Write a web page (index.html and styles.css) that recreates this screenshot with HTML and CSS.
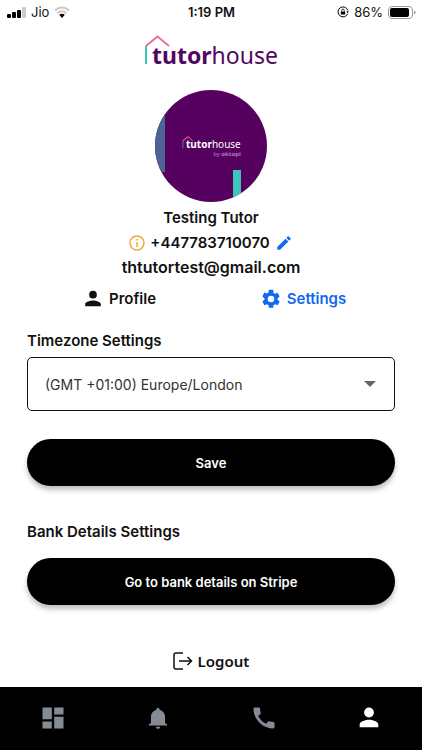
FILE: index.html
```
<!DOCTYPE html>

<html lang="en">

<head>

    <meta charset="UTF-8">

    <meta name="viewport" content="width=device-width, initial-scale=1.0">

    <title>Tutorhouse Settings</title>

    <link rel="stylesheet" href="styles.css">

</head>

<body>

    <div class="status-bar">

        <div class="status-left">
            <svg width="19" height="11" viewBox="0 0 19 11">
                <rect x="0" y="7" width="4" height="4" rx="1" />
                <rect x="5" y="5" width="4" height="6" rx="1" />
                <rect x="10" y="3" width="4" height="8" rx="1" />
                <rect x="15" y="0" width="4" height="11" rx="1" fill="#cccccc" />
            </svg>
            <span>Jio</span>
            <svg width="16" height="12" viewBox="0 0 16 12" fill="none" stroke="#cccccc" stroke-width="2">
                <path d="M1 4.5C5 .4 11 .4 15 4.5" />
                <path d="M3.4 7.2C6 4.6 10 4.6 12.6 7.2" />
                <path d="M5.2 8.7Q8 6.6 10.8 8.7L8 12z" fill="#000000" stroke="none" />
            </svg>
        </div>

        <span class="status-time">1:19 PM</span>

        <div class="status-right">
            <svg width="12" height="12" viewBox="0 0 12 12" fill="none" stroke="#000000">
                <path d="M10.7 7.7A5 5 0 1 1 10.8 4.4" />
                <path d="M9.3 5.2h2.5l-1.1 2z" fill="#000000" stroke="none" />
                <rect x="3.8" y="5.4" width="4.4" height="3.2" rx=".5" fill="#000000" stroke="none" />
                <path d="M4.7 5.5V4.4a1.3 1.3 0 0 1 2.6 0v1.1" stroke-width=".8" />
            </svg>
            <span>86%</span>
            <svg width="28" height="13" viewBox="0 0 28 13">
                <rect x=".5" y=".5" width="24" height="12" rx="3.5" fill="none" stroke="#999999" />
                <rect x="2" y="2" width="19" height="9" rx="2" />
                <path d="M26 4.5q1.6.5 1.6 2t-1.6 2z" fill="#999999" />
            </svg>
        </div>

    </div>

    <header class="logo">
        <svg class="logo-house" viewBox="0 0 28 30" fill="none" stroke-width="2">
            <path d="M2 11v18" stroke="#3fc5b9" />
            <path d="M2 11L13.500 1.500L25 11" stroke="#ee6b91" />
        </svg>
        <span class="logo-text"><b>tutor</b>house</span>
    </header>

    <main class="content">

        <div class="avatar">
            <div class="avatar-bar-blue"></div>
            <div class="avatar-bar-teal"></div>
            <div class="avatar-logo">
                <svg class="avatar-house" viewBox="0 0 28 30" fill="none" stroke-width="2.5">
                    <path d="M2 11v18" stroke="#47739b" />
                    <path d="M2 11L14 1.5L25 11" stroke="#dd4f91" />
                </svg>
                <span class="avatar-name"><b>tutor</b>house</span>
                <span class="avatar-by">by <b>oktopi</b></span>
            </div>
        </div>

        <div class="details">
            <div class="detail-row">Testing Tutor</div>
            <div class="detail-row">
                <svg width="16" height="16" viewBox="0 0 16 16" fill="none" stroke="#f0a62e">
                    <circle cx="8" cy="8" r="7" stroke-width="1.4" />
                    <path d="M8 7v5M8 4v1.6" stroke-width="1.4" />
                </svg>
                <span>+447783710070</span>
                <button class="icon-button" aria-label="Edit phone number">
                    <svg width="18" height="18" viewBox="0 0 24 24" fill="#1268f3">
                        <path d="M3 17.25V21h3.75L17.81 9.94l-3.75-3.75zM20.71 7.04a1 1 0 0 0 0-1.41l-2.34-2.34a1 1 0 0 0-1.41 0l-1.83 1.83 3.75 3.75z" />
                    </svg>
                </button>
            </div>
            <div class="detail-row detail-email">thtutortest@gmail.com</div>
        </div>

        <div class="tabs">
            <button class="tab">
                <svg width="22" height="22" viewBox="0 0 24 24">
                    <path d="M12 11.5a4.2 4.2 0 1 0 0-8.4 4.200 4.200 0 0 0 0 8.400zm0 2c-2.670 0-8.500 1.340-8.500 4v2.500h17v-2.500c0-2.660-5.830-4-8.500-4z" />
                </svg>
                Profile
            </button>
            <button class="tab tab-active">
                <svg width="22" height="22" viewBox="0 0 24 24">
                    <path d="M19.14 12.94c.04-.3.06-.61.06-.94s-.02-.64-.07-.94l2.03-1.58a.49.49 0 0 0 .12-.61l-1.92-3.32a.49.49 0 0 0-.59-.22l-2.39.96a7 7 0 0 0-1.62-.94l-.36-2.54A.48.48 0 0 0 13.92 2h-3.84a.48.48 0 0 0-.47.41l-.36 2.54a7.4 7.4 0 0 0-1.62.94l-2.39-.96a.48.48 0 0 0-.59.22L2.74 8.87a.48.48 0 0 0 .12.61l2.03 1.58a6 6 0 0 0 0 1.88l-2.03 1.58a.49.49 0 0 0-.12.61l1.92 3.32c.12.22.37.29.59.22l2.39-.96c.5.38 1.03.7 1.62.94l.36 2.54c.05.24.24.41.48.41h3.84c.24 0 .44-.17.47-.41l.36-2.54a7 7 0 0 0 1.62-.94l2.39.96c.22.08.47 0 .59-.22l1.92-3.32a.48.48 0 0 0-.12-.61zM12 15.6a3.6 3.6 0 1 1 0-7.2 3.6 3.6 0 0 1 0 7.2z" />
                </svg>
                Settings
            </button>
        </div>

        <label class="section-title" for="timezone">Timezone Settings</label>

        <div class="select-box">
            <select id="timezone">
                <option>(GMT +01:00) Europe/London</option>
            </select>
            <svg class="select-arrow" width="12" height="6" viewBox="0 0 12 6">
                <path d="M0 0h12L6 6z" />
            </svg>
        </div>

        <button class="main-button">Save</button>

        <h2 class="section-title">Bank Details Settings</h2>

        <button class="main-button">Go to bank details on Stripe</button>

        <button class="logout">
            <svg width="20" height="18" viewBox="0 0 20 18" fill="none" stroke="#111111" stroke-width="1.5">
                <path d="M10 1H3Q1 1 1 3v12q0 2 2 2h7" />
                <path d="M6 9h12M14.5 5L18.5 9L14.5 13" />
            </svg>
            Logout
        </button>

    </main>

    <nav class="bottom-nav">
        <a href="#" aria-label="Dashboard">
            <svg width="28" height="28" viewBox="0 0 24 24">
                <path d="M3 13h8V3H3zm0 8h8v-6H3zm10 0h8V11h-8zm0-18v6h8V3z" />
            </svg>
        </a>
        <a href="#" aria-label="Notifications">
            <svg width="26" height="26" viewBox="0 0 24 24">
                <path d="M12 22c1.1 0 2-.9 2-2h-4a2 2 0 0 0 2 2zm6.500-5.500V11c0-3.100-1.900-5.600-5-6.300V4a1.500 1.500 0 0 0-3 0v.7c-3.100.7-5 3.200-5 6.300v5.500L3.500 18v1h17v-1z" />
            </svg>
        </a>
        <a href="#" aria-label="Calls">
            <svg width="28" height="28" viewBox="0 0 24 24">
                <path d="M20.010 15.380c-1.230 0-2.420-.2-3.530-.56a1 1 0 0 0-1.010.24l-1.570 1.970a15.200 15.200 0 0 1-6.890-6.830l1.950-1.660a1 1 0 0 0 .24-1.020 11 11 0 0 1-.56-3.530A1 1 0 0 0 7.650 3H4.190C3.650 3 3 3.240 3 3.990 3 13.280 10.730 21 20.010 21c.71 0 .99-.63.99-1.180v-3.450a1 1 0 0 0-.99-.99z" />
            </svg>
        </a>
        <a href="#" class="nav-active" aria-label="Profile">
            <svg width="28" height="28" viewBox="0 0 24 24">
                <path d="M12 11.500a4.200 4.200 0 1 0 0-8.400 4.200 4.200 0 0 0 0 8.400zm0 2c-2.670 0-8 1.340-8 4v2.500h16v-2.500c0-2.660-5.330-4-8-4z" />
            </svg>
        </a>
    </nav>

</body>

</html>
```

FILE: styles.css
```
* {

    box-sizing: border-box;

}

body {

    font-family: 'Inter', 'Open Sans', sans-serif;
    background-color: white;
    color: #111111;
    margin: 0;
    display: flex;
    flex-direction: column;
    min-height: 100vh;

}

button {

    font-family: inherit;
    color: inherit;
    background: none;
    border: none;
    padding: 0;
    cursor: pointer;

}

svg {

    display: block;
    flex-shrink: 0;

}

.status-bar {

    display: grid;
    grid-template-columns: 1fr auto 1fr;
    align-items: center;
    height: 24px;
    padding: 0 6px 0 7px;
    font-size: 13px;

}

.status-left,
.status-right {

    display: flex;
    align-items: center;
    gap: 5px;

}

.status-right {

    justify-content: flex-end;

}

.status-time {

    font-weight: 600;

}

.logo {

    position: relative;
    align-self: center;
    margin-top: 11px;
    padding: 4px 0 0 8px;
    color: #53065f;
    font-family: 'Noto Sans', sans-serif;
    font-size: 23px;
    line-height: 32px;

}

.logo-text {

    display: block;

}

.logo-house {

    position: absolute;
    top: 0;
    left: 0;
    width: 28px;
    height: 30px;

}

.content {

    display: flex;
    flex-direction: column;
    padding: 0 27px;

}

.avatar {

    position: relative;
    align-self: center;
    width: 112px;
    height: 112px;
    margin-top: 19px;
    border-radius: 50%;
    overflow: hidden;
    background-color: #560060;

}

.avatar-bar-blue {

    position: absolute;
    top: 0;
    left: 0;
    width: 10px;
    height: 82px;
    background-color: #4c6493;

}

.avatar-bar-teal {

    position: absolute;
    right: 26px;
    bottom: 0;
    width: 8px;
    height: 32px;
    background-color: #3fc5b9;

}

.avatar-logo {

    position: absolute;
    top: 46px;
    left: 27px;
    display: flex;
    flex-direction: column;
    padding: 2px 0 0 4px;
    color: white;
    font-family: 'Noto Sans', sans-serif;

}

.avatar-house {

    position: absolute;
    top: 0;
    left: 0;
    width: 12px;
    height: 13px;

}

.avatar-name {

    font-size: 10px;
    line-height: 12px;

}

.avatar-by {

    align-self: flex-end;
    color: #b67fbb;
    font-size: 6px;
    line-height: 8px;

}

.details {

    margin-top: 3px;

}

.detail-row {

    display: flex;
    align-items: center;
    justify-content: center;
    gap: 5px;
    font-size: 15px;
    font-weight: 600;
    line-height: 25px;

}

.detail-email {

    font-size: 16px;

}

.tabs {

    display: grid;
    grid-template-columns: 1fr 1fr;
    margin-top: 7px;

}

.tab {

    display: flex;
    align-items: center;
    justify-content: center;
    gap: 5px;
    font-size: 15px;
    font-weight: 600;
    line-height: 24px;

}

.tab svg {

    fill: currentColor;

}

.tab-active {

    color: #1268f3;

}

.section-title {

    margin: 17px 0 4px;
    font-size: 15px;
    font-weight: 600;
    line-height: 25px;

}

.select-box {

    position: relative;

}

.select-box select {

    appearance: none;
    display: block;
    width: 100%;
    height: 54px;
    padding: 0 44px 0 17px;
    border: 1px solid #111111;
    border-radius: 5px;
    background-color: white;
    color: #333333;
    font-family: inherit;
    font-size: 14px;

}

.select-arrow {

    position: absolute;
    top: 24px;
    right: 19px;
    fill: #666666;
    pointer-events: none;

}

.main-button {

    height: 47px;
    border-radius: 24px;
    background-color: black;
    color: white;
    font-size: 13px;
    font-weight: 600;
    box-shadow: 0 4px 5px rgba(0, 0, 0, 0.25);

}

.select-box + .main-button {

    margin-top: 28px;

}

h2.section-title {

    margin: 33px 0 14px;

}

.logout {

    display: flex;
    align-items: center;
    align-self: center;
    gap: 5px;
    margin: 44px 0 14px;
    font-family: 'Noto Sans', sans-serif;
    font-size: 15px;
    font-weight: 600;
    line-height: 24px;

}

.bottom-nav {

    display: grid;
    grid-template-columns: repeat(4, 1fr);
    height: 63px;
    margin-top: auto;
    padding-bottom: 2px;
    background-color: black;

}

.bottom-nav a {

    display: flex;
    align-items: center;
    justify-content: center;
    color: #858b94;

}

.bottom-nav a.nav-active {

    color: white;

}

.bottom-nav svg {

    fill: currentColor;

}
```
